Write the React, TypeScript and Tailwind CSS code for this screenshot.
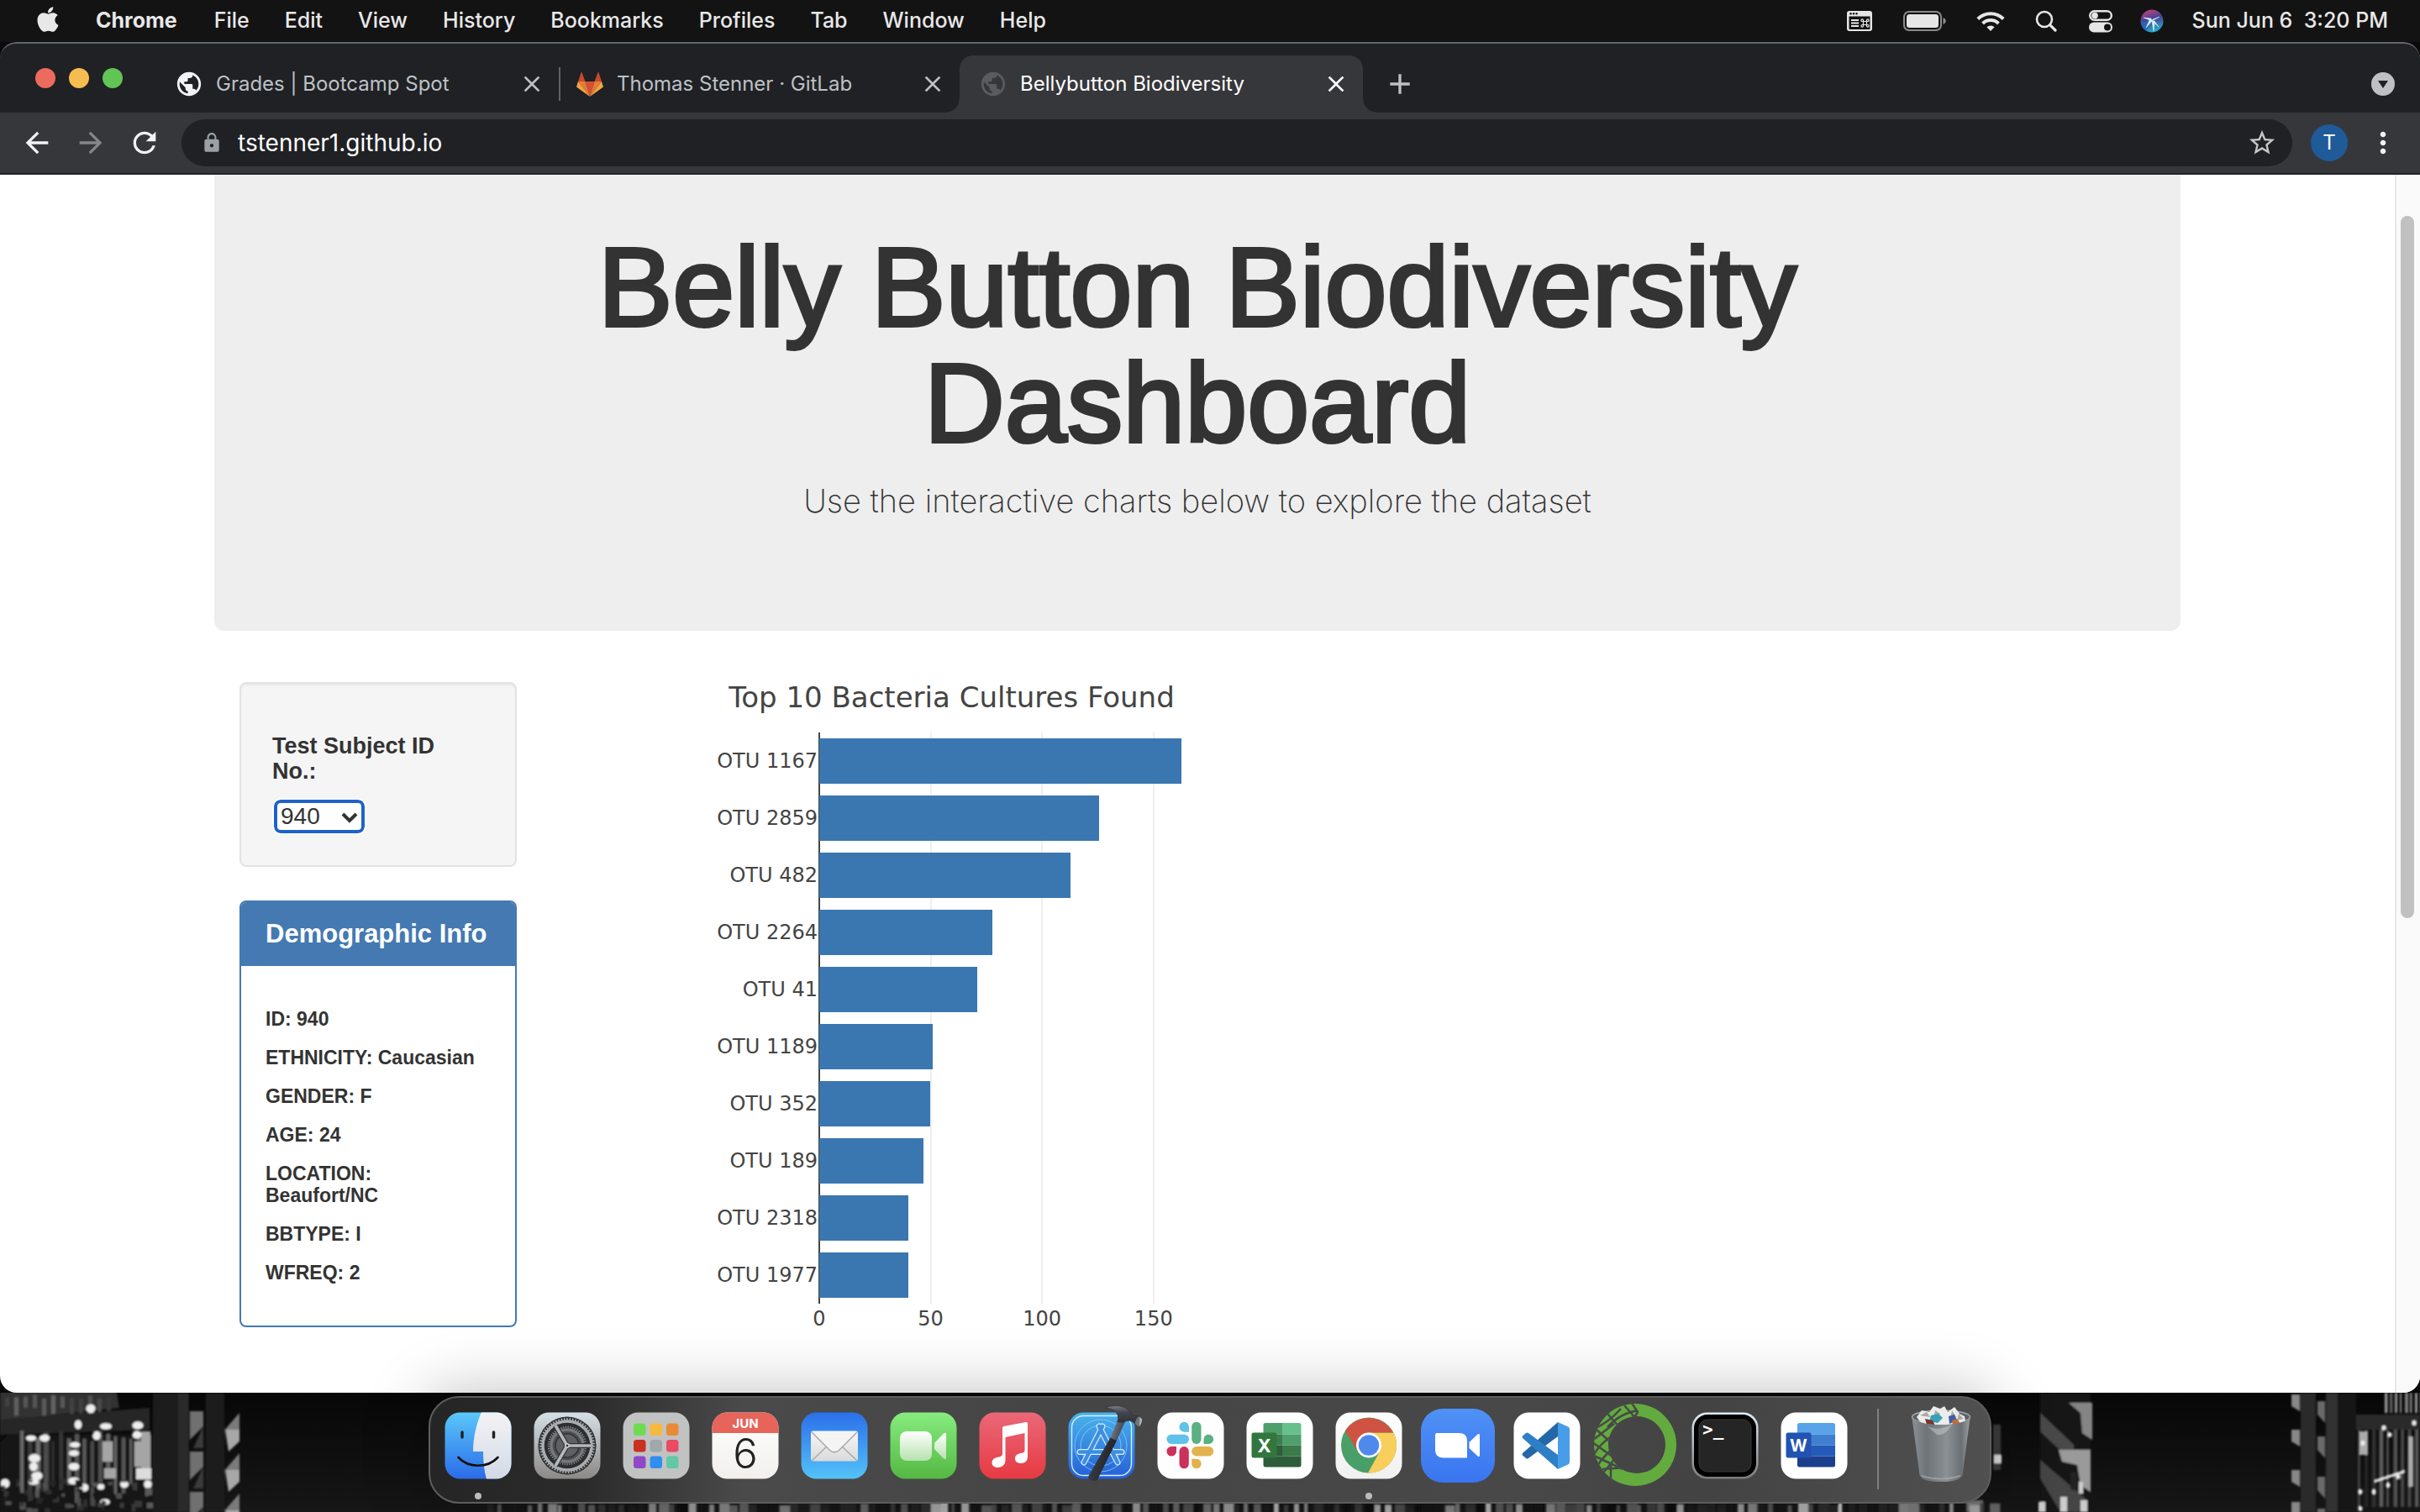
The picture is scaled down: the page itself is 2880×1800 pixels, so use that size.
import React from 'react';
import { FaApple } from 'react-icons/fa';
import {
  MdAdd,
  MdArrowBack,
  MdArrowForward,
  MdClose,
  MdLock,
  MdMoreVert,
  MdPublic,
  MdRefresh,
  MdStarBorder,
} from 'react-icons/md';

const menus = ['File', 'Edit', 'View', 'History', 'Bookmarks', 'Profiles', 'Tab', 'Window', 'Help'];

const cultures = [
  { id: 'OTU 1167', value: 163 },
  { id: 'OTU 2859', value: 126 },
  { id: 'OTU 482', value: 113 },
  { id: 'OTU 2264', value: 78 },
  { id: 'OTU 41', value: 71 },
  { id: 'OTU 1189', value: 51 },
  { id: 'OTU 352', value: 50 },
  { id: 'OTU 189', value: 47 },
  { id: 'OTU 2318', value: 40 },
  { id: 'OTU 1977', value: 40 },
];
const ticks = [0, 50, 100, 150];
const axisMax = 163 / 0.95;
const pct = (v: number) => `${(v / axisMax) * 100}%`;

const demographics = [
  'ID: 940',
  'ETHNICITY: Caucasian',
  'GENDER: F',
  'AGE: 24',
  'LOCATION: Beaufort/NC',
  'BBTYPE: I',
  'WFREQ: 2',
];

/* ---------- Menu bar ---------- */

function StatusIcons() {
  return (
    <div className="flex items-center">
      <svg className="mr-[37px] h-6 w-[30px]" viewBox="0 0 30 24" fill="#e6e6e6">
        <path fillRule="evenodd" d="M3 0h24a3 3 0 0 1 3 3v18a3 3 0 0 1-3 3H3a3 3 0 0 1-3-3V3a3 3 0 0 1 3-3zM2.500 6.500v14.500a1 1 0 0 0 1 1h23a1 1 0 0 0 1-1V6.500z" />
        <circle cx="4.500" cy="3.200" r="1.200" fill="#111" />
        <circle cx="8" cy="3.200" r="1.200" fill="#111" />
        <circle cx="11.500" cy="3.200" r="1.200" fill="#111" />
        <path d="M5 10h9v2H5zM5 13.500h9v2H5zM5 17h9v2H5z" />
        <path d="M19.500 12.500h4v4h-4zM19.500 12.500h-1.300a1.300 1.300 0 1 1 1.300-1.300zM23.500 12.500v-1.300a1.300 1.300 0 1 1 1.300 1.300zM19.500 16.500v1.300a1.300 1.300 0 1 1-1.300-1.300zM23.500 16.500h1.300a1.300 1.300 0 1 1-1.300 1.300z" fill="none" stroke="#e6e6e6" strokeWidth="1.200" />
      </svg>
      <svg className="mr-9 h-6 w-[51px]" viewBox="0 0 51 24">
        <rect x="1" y="1" width="44" height="22" rx="6" fill="none" stroke="#8a8a8a" strokeWidth="2" />
        <rect x="4" y="4" width="38" height="16" rx="3.500" fill="#e6e6e6" />
        <path d="M47.500 8v8c2-.8 3.200-2.200 3.200-4s-1.200-3.200-3.200-4z" fill="#8a8a8a" />
      </svg>
      <svg className="mr-9 h-6 w-[34px]" viewBox="0 0 34 24" fill="none" stroke="#e6e6e6" strokeWidth="4">
        <path d="M1.800 9.500a21.500 21.500 0 0 1 30.400 0" />
        <path d="M7.600 15a13.300 13.300 0 0 1 18.800 0" />
        <path d="M17 24l-4.600-4.700a6.500 6.500 0 0 1 9.200 0z" fill="#e6e6e6" stroke="none" />
      </svg>
      <svg className="mr-[38px] h-[26px] w-[26px]" viewBox="0 0 26 26" fill="none" stroke="#e6e6e6" strokeWidth="2.600" strokeLinecap="round">
        <circle cx="11" cy="11" r="9" />
        <path d="M17.800 17.800l6.200 6.200" strokeWidth="3.200" />
      </svg>
      <svg className="mr-[33px] h-7 w-7" viewBox="0 0 28 28">
        <rect x="1.200" y="2.200" width="25.600" height="10.600" rx="5.300" fill="none" stroke="#e6e6e6" strokeWidth="2.400" />
        <circle cx="7" cy="7.500" r="3.800" fill="#e6e6e6" />
        <rect x="0" y="15.500" width="28" height="12" rx="6" fill="#e6e6e6" />
        <circle cx="22" cy="21.500" r="4" fill="#111" />
      </svg>
      <svg className="mr-[34px] h-7 w-7" viewBox="0 0 28 28">
        <defs>
          <linearGradient id="siri" x1="0" y1="0" x2="0.300" y2="1">
            <stop offset="0" stopColor="#d4467c" />
            <stop offset="0.500" stopColor="#4a3f8f" />
            <stop offset="1" stopColor="#2aa3c4" />
          </linearGradient>
        </defs>
        <circle cx="14" cy="14" r="13.500" fill="url(#siri)" />
        <path d="M0.500 14a13.500 13.500 0 0 0 7 12l6-12z" fill="#2c62b8" opacity="0.800" />
        <path d="M14 14L4 10l9 1zM14 14l-7 8 4-9zM14 14l9-5-8 3zM14 14l8 7-5-7zM14 14l2 12 1-9z" fill="#e4fbff" stroke="#bdeeff" strokeWidth="0.600" />
      </svg>
    </div>
  );
}

function MenuBar() {
  return (
    <nav aria-label="Menu bar" className="flex h-[50px] items-center bg-[#131313] pr-[38px] pl-11 text-[25px] font-medium text-[#e8e8e8]">
      <button aria-label="Apple menu" className="mr-[44px] pb-1">
        <FaApple size={34} className="-mx-1" />
      </button>
      <button className="mr-[44px] font-bold">Chrome</button>
      <div className="flex gap-[42px]">
        {menus.map((m) => (
          <button key={m}>{m}</button>
        ))}
      </div>
      <div className="flex-1" />
      <StatusIcons />
      <time className="whitespace-pre">Sun Jun 6  3:20 PM</time>
    </nav>
  );
}

/* ---------- Browser chrome ---------- */

function GitlabIcon() {
  return (
    <svg className="h-[30px] w-8" viewBox="0 0 32 30">
      <path d="M6 0l4.500 12H2zM26 0l-4.500 12H30z" fill="#c8492d" />
      <path d="M10.500 12h11L16 30z" fill="#d4502f" />
      <path d="M2 12h8.500L16 30zM30 12h-8.500L16 30z" fill="#e67b38" />
      <path d="M2 12L0 18.500 16 30zM30 12l2 6.500L16 30z" fill="#efa744" />
    </svg>
  );
}

function Tab({ icon, title, active }: { icon: React.ReactNode; title: string; active?: boolean }) {
  return (
    <div
      className={
        active
          ? 'relative flex h-[68px] w-[480px] items-center rounded-t-[16px] bg-[#36373b] pr-4 pl-[23px] text-white'
          : 'flex h-[68px] w-[477px] items-center pr-4 pl-[20px] text-[#bdc1c6]'
      }
    >
      {active && (
        <>
          <span className="absolute bottom-0 -left-4 size-4 bg-[radial-gradient(circle_at_0_0,transparent_15px,#36373b_16px)]" />
          <span className="absolute -right-4 bottom-0 size-4 bg-[radial-gradient(circle_at_100%_0,transparent_15px,#36373b_16px)]" />
        </>
      )}
      <button role="tab" aria-selected={!!active} className="flex flex-1 items-center gap-[15px] text-left text-[24px]">
        <span className="flex w-[34px] justify-center">{icon}</span>
        {title}
      </button>
      <button aria-label={`Close ${title}`}>
        <MdClose size={32} />
      </button>
    </div>
  );
}

function TabStrip() {
  return (
    <div className="flex h-[82px] items-end pl-[42px]">
      <div className="mr-[42px] flex h-full gap-4 pt-[29px]">
        <button aria-label="Close window" className="size-6 rounded-full bg-[#ed6a5e]" />
        <button aria-label="Minimize window" className="size-6 rounded-full bg-[#f5bd4f]" />
        <button aria-label="Zoom window" className="size-6 rounded-full bg-[#61c454]" />
      </div>
      <div role="tablist" className="flex items-center">
        <Tab icon={<MdPublic size={34} className="text-[#f1f3f4]" />} title="Grades | Bootcamp Spot" />
        <span className="-mr-0.5 h-10 w-0.5 bg-[#5f6165]" />
        <Tab icon={<GitlabIcon />} title="Thomas Stenner · GitLab" />
        <Tab active icon={<MdPublic size={34} className="text-[#5a5b5f]" />} title="Bellybutton Biodiversity" />
      </div>
      <button aria-label="New tab" className="ml-6 flex h-[68px] items-center text-[#bdc1c6]">
        <MdAdd size={40} />
      </button>
      <div className="flex-1" />
      <button aria-label="Search tabs" className="mr-[30px] flex h-[68px] items-center">
        <svg className="size-7" viewBox="0 0 28 28">
          <circle cx="14" cy="14" r="14" fill="#bdc1c6" />
          <path d="M8 10h12l-6 9z" fill="#202124" />
        </svg>
      </button>
    </div>
  );
}

function Toolbar() {
  return (
    <div className="flex h-[74px] items-center border-b-2 border-[#232326] bg-[#36373b] px-6 text-[#f1f3f4]">
      <button aria-label="Back"><MdArrowBack size={40} /></button>
      <button aria-label="Forward" className="ml-6 text-[#85868a]"><MdArrowForward size={40} /></button>
      <button aria-label="Reload" className="ml-6"><MdRefresh size={40} /></button>
      <form className="ml-[24px] flex h-14 flex-1 items-center rounded-full bg-[#202124] pr-[18px] pl-[23px]">
        <MdLock size={26} className="text-[#9aa0a6]" />
        <input
          aria-label="Address"
          defaultValue="tstenner1.github.io"
          className="ml-[18px] flex-1 bg-transparent text-[28px] text-white outline-none"
        />
        <button type="button" aria-label="Bookmark this page" className="text-[#c6c7c5]"><MdStarBorder size={36} /></button>
      </form>
      <button aria-label="Profile" className="ml-[22px] flex size-11 items-center justify-center rounded-full bg-[#1f5a99] text-[24px] text-white">T</button>
      <button aria-label="More" className="ml-[22px]"><MdMoreVert size={40} /></button>
    </div>
  );
}

/* ---------- Page ---------- */

function Sidebar() {
  return (
    <aside className="col-span-2 flex flex-col gap-10 px-[30px] pt-[61px] text-[#333]">
      <div className="rounded-lg border-2 border-[#e3e3e3] bg-[#f5f5f5] px-[37px] pt-[59px] pb-[38px] shadow-[inset_0_2px_2px_rgba(0,0,0,0.05)]">
        <label htmlFor="subject" className="block text-[27px] leading-[30px] font-bold">
          Test Subject ID No.:
        </label>
        <div className="relative mt-[19px] ml-0.5 w-[108px]">
          <select
            id="subject"
            defaultValue="940"
            className="block h-10 w-full appearance-none rounded-lg border-4 border-[#1f62c9] bg-white pl-1 text-[28px] leading-[32px] text-[#333] outline-2 outline-white"
          >
            <option>940</option>
          </select>
          <svg className="pointer-events-none absolute top-3.5 right-2 h-3.5 w-5" viewBox="0 0 20 14" fill="none" stroke="#333" strokeWidth="4">
            <path d="M2 3l8 8 8-8" />
          </svg>
        </div>
      </div>
      <section className="overflow-hidden rounded-lg border-2 border-[#4479b1] bg-white">
        <h3 className="bg-[#4479b1] px-[29px] py-5 text-[31px] leading-9 font-bold text-white">Demographic Info</h3>
        <ul className="flex flex-col gap-5 pt-[50px] pr-10 pb-[50px] pl-[29px] text-[23px] leading-[26px] font-bold">
          {demographics.map((d) => (
            <li key={d}>{d}</li>
          ))}
        </ul>
      </section>
    </aside>
  );
}

function Chart() {
  return (
    <figure className="col-span-5 px-[30px] pt-[57px] font-['DejaVu_Sans',sans-serif] text-[#444]">
      <figcaption className="text-center text-[34px] leading-[44px]">Top 10 Bacteria Cultures Found</figcaption>
      <div className="mt-[20px] grid grid-cols-[300px_minmax(0,1fr)] pr-[160px]">
        <ul className="text-right text-[24px] leading-[68px]">
          {cultures.map((c) => (
            <li key={c.id} className="pr-0.5">{c.id}</li>
          ))}
        </ul>
        <div className="relative">
          {ticks.slice(1).map((t) => (
            <span key={t} className="absolute inset-y-0 w-0.5 -translate-x-1/2 bg-[#eee]" style={{ left: pct(t) }} />
          ))}
          <div className="relative -ml-px border-l-2 border-[#444]">
            {cultures.map((c) => (
              <div key={c.id} className="h-[68px] py-[7px]">
                <div className="-ml-px h-full bg-[#3a77b0]" style={{ width: pct(c.value) }} />
              </div>
            ))}
          </div>
        </div>
        <div />
        <div className="relative h-10 text-[24px] leading-9">
          {ticks.map((t) => (
            <span key={t} className="absolute -translate-x-1/2" style={{ left: pct(t) }}>{t}</span>
          ))}
        </div>
      </div>
    </figure>
  );
}

function Page() {
  return (
    <div className="flex flex-1 bg-white font-['Liberation_Sans',Arial,sans-serif]">
      <main className="flex-1">
        <div className="mx-auto max-w-[2340px]">
          <header className="rounded-b-xl bg-[#eee] px-[120px] pt-[65px] pb-[121px] text-center text-[#333]">
            <h1 className="text-[133px] leading-[138px] [-webkit-text-stroke:4px_#333]">
              Belly Button Biodiversity<br />Dashboard
            </h1>
            <p className="mt-[13px] font-['Inter',sans-serif] text-[38px] leading-[68px] font-extralight">
              Use the interactive charts below to explore the dataset
            </p>
          </header>
          <div className="grid grid-cols-12">
            <Sidebar />
            <Chart />
          </div>
        </div>
      </main>
      <div className="w-[30px] border-l-2 border-[#e8e8e8] bg-[#fafafa] pt-[49px] pl-[5px]">
        <div className="h-[836px] w-4 rounded-full bg-[#c1c1c1]" />
      </div>
    </div>
  );
}

/* ---------- Dock icons, drawn on an 80 unit cell ---------- */

function Grad({ id, from, to }: { id: string; from: string; to: string }) {
  return (
    <defs>
      <linearGradient id={id} x1="0" y1="0" x2="0" y2="1">
        <stop offset="0" stopColor={from} />
        <stop offset="1" stopColor={to} />
      </linearGradient>
    </defs>
  );
}

const Plate = ({ fill }: { fill: string }) => <rect x="0.500" y="0.500" width="79" height="79" rx="18" fill={fill} />;

const Finder = () => (
  <>
    <Grad id="fdr" from="#5ac8fa" to="#2b6be8" />
    <Grad id="fdr2" from="#f3f3f6" to="#d2dae6" />
    <clipPath id="fclip"><rect x="0.500" y="0.500" width="79" height="79" rx="18" /></clipPath>
    <Plate fill="url(#fdr)" />
    <path clipPath="url(#fclip)" d="M44 0c-6 14-10 30-10 47h12c0 12 1 22 4 33h32V0z" fill="url(#fdr2)" />
    <path d="M21 24v6M58.500 24v6" stroke="#222" strokeWidth="3.500" strokeLinecap="round" />
    <path d="M16.500 54c12 13 35 13 47 0" fill="none" stroke="#111" strokeWidth="2.600" strokeLinecap="round" />
  </>
);

const Settings = () => (
  <>
    <Grad id="set" from="#d5e0e6" to="#8c8986" />
    <Plate fill="url(#set)" />
    <circle cx="40" cy="40" r="34.500" fill="#2c2e30" />
    <circle cx="40" cy="40" r="29" fill="none" stroke="#a9adaf" strokeWidth="3.500" />
    <circle cx="40" cy="40" r="31.500" fill="none" stroke="#a9adaf" strokeWidth="3" strokeDasharray="1.600 1.750" />
    <circle cx="40" cy="40" r="19" fill="#4c4f51" stroke="#76797b" strokeWidth="3.500" />
    <circle cx="40" cy="40" r="22" fill="none" stroke="#85898b" strokeWidth="2.500" strokeDasharray="1.300 1.500" />
    <circle cx="40" cy="40" r="14" fill="#5d6163" stroke="#333" strokeWidth="1.500" />
    <path d="M40 40h28M40 40L26 16M40 40L26 64" stroke="#303234" strokeWidth="6" />
    <path d="M40 40h28M40 40L26 16M40 40L26 64" stroke="#b4b8ba" strokeWidth="3.600" />
    <circle cx="40" cy="40" r="3" fill="#c3c7c9" />
    <circle cx="40" cy="40" r="1.300" fill="#333" />
  </>
);

const padColors = ['#6fdc50', '#f5b93b', '#e98b36', '#c9301f', '#a0a8ab', '#ea4a62', '#8e48c8', '#2f8ff0', '#62c7a4'];
const Launchpad = () => (
  <>
    <Plate fill="#c1c2c2" />
    {padColors.map((c, i) => (
      <rect key={c} x={13 + (i % 3) * 19.5} y={13.500 + Math.floor(i / 3) * 19.5} width="14.500" height="14.500" rx="3.500" fill={c} />
    ))}
  </>
);

const Calendar = () => (
  <>
    <Grad id="cal" from="#ffffff" to="#f1f0ee" />
    <Plate fill="url(#cal)" />
    <path d="M0.500 25V18.500a18 18 0 0 1 18-18h43a18 18 0 0 1 18 18V25z" fill="#e6645a" />
    <text x="40" y="19" textAnchor="middle" fontSize="15" fontWeight="700" fill="#fff">JUN</text>
    <text x="40" y="67" textAnchor="middle" fontSize="49" fontWeight="300" fill="#222">6</text>
  </>
);

const Mail = () => (
  <>
    <Grad id="mail" from="#2b70ea" to="#54c2f8" />
    <Grad id="mail2" from="#f7f7f7" to="#dadada" />
    <Plate fill="url(#mail)" />
    <rect x="12" y="22.500" width="56" height="36" rx="3" fill="url(#mail2)" />
    <path d="M13.500 57.500L31 41M66.500 57.500L49 41" stroke="#a9a9a9" strokeWidth="1.400" />
    <path d="M13 24l21 21q6 5.500 12 0l21-21" fill="#f4f4f4" stroke="#a5a5a5" strokeWidth="1.400" />
  </>
);

const FaceTime = () => (
  <>
    <Grad id="ft" from="#86ec7e" to="#55b843" />
    <Grad id="ft2" from="#ffffff" to="#b6e2ae" />
    <Plate fill="url(#ft)" />
    <rect x="12" y="23" width="38" height="35" rx="8" fill="url(#ft2)" />
    <path d="M53 37l11-11.500q3-2 3 1v28q0 3-3 1L53 44z" fill="url(#ft2)" />
  </>
);

const Music = () => (
  <>
    <Grad id="mus" from="#ea6878" to="#e63a42" />
    <Plate fill="url(#mus)" />
    <path d="M28 19q0-1.500 1.500-2L56 12q2-.3 2 1.500V53c0 5-3 8-8 8-4.500 0-7-2.500-7-5.500 0-4 3-6 7-6.500 3.500-.5 4.500-1.500 4.500-4V25L31.500 30v27c0 5.500-3.500 9-9 9-4.500 0-7-2.500-7-5.500 0-4 3-6 7-6.700 4-.6 5.500-1.800 5.500-4.500z" fill="#fff" />
  </>
);

const Xcode = () => (
  <>
    <defs>
      <linearGradient id="hammerHead" x1="0" y1="0" x2="0" y2="1">
        <stop offset="0" stopColor="#7a7d86" />
        <stop offset="0.350" stopColor="#43464e" />
        <stop offset="1" stopColor="#2b2d33" />
      </linearGradient>
      <linearGradient id="shaft" x1="0" y1="0" x2="1" y2="0.400">
        <stop offset="0" stopColor="#8b9098" />
        <stop offset="0.500" stopColor="#5c616b" />
        <stop offset="1" stopColor="#3c4049" />
      </linearGradient>
      <linearGradient id="grip" x1="0" y1="0" x2="1" y2="0.400">
        <stop offset="0.300" stopColor="#3a3c44" />
        <stop offset="1" stopColor="#1f2026" />
      </linearGradient>
    </defs>
    <Grad id="xc" from="#49b3ec" to="#245fd6" />
    <Plate fill="url(#xc)" />
    <rect x="4.500" y="4.500" width="71" height="71" rx="14" fill="none" stroke="#d9efff" strokeWidth="1.400" />
    <circle cx="39" cy="40" r="31" fill="none" stroke="#8fcaf5" strokeWidth="0.800" />
    <circle cx="39" cy="40" r="24" fill="none" stroke="#8fcaf5" strokeWidth="0.800" />
    <g stroke="#d9efff" strokeWidth="7" strokeLinecap="round">
      <path d="M14 47.500h50M41 17L19 60M37 17l22 43" />
    </g>
    <g stroke="#3d8fe0" strokeWidth="4.600" strokeLinecap="round">
      <path d="M14 47.500h50M41 17L19 60M37 17l22 43" />
    </g>
    <path d="M59 10h9.500L58 34l-7.500-3z" fill="url(#shaft)" />
    <path d="M50.500 30.500L58 34 35 80.500q-1.500 2-5 1.500-5.500-1-6-5z" fill="url(#grip)" />
    <path d="M44-5Q49-7.500 56-7.500 66-7.500 71-3L77 4 83 4.500 86 5 80 15 77 11.500Q70 9 67 12H59Q61 3 56-1 51-4.500 44-5z" fill="url(#hammerHead)" stroke="#2c2e34" strokeWidth="0.600" />
    <path d="M84.500 5l3.500 3q.5 6-3.500 9.500l-5-3.500q1-6 5-9z" fill="#6f737c" />
    <path d="M85.500 6l2.500 2.500q0 5-3 8z" fill="#b2b5bc" />
  </>
);

const Slack = () => (
  <>
    <Plate fill="#fefefe" />
    <path d="M38 23.700h-6a5.800 6 0 1 1 6-6z" fill="#5fc2ea" />
    <rect x="11.400" y="26.700" width="26.600" height="11.300" rx="5.650" fill="#5fc2ea" />
    <rect x="41.200" y="11.700" width="11.300" height="26.300" rx="5.650" fill="#5ab083" />
    <path d="M55.500 38v-6a5.800 5.600 0 1 1 6 6z" fill="#5ab083" />
    <path d="M23 41v6a5.800 5.800 0 1 1-6-6z" fill="#cc315b" />
    <rect x="26.500" y="41" width="11.300" height="26.300" rx="5.650" fill="#cc315b" />
    <rect x="41.200" y="41" width="26" height="11.500" rx="5.700" fill="#e2b24c" />
    <path d="M41.200 55.700h6a5.700 5.800 0 1 1-6 6z" fill="#e2b24c" />
  </>
);

const Excel = () => (
  <>
    <Plate fill="#fff" />
    <path d="M23 13h20v13.500H20.500V15.500Q20.500 13 23 13z" fill="#4e9f6c" />
    <path d="M43 13h20q2.500 0 2.500 2.500v11H43z" fill="#67c08c" />
    <path d="M20.500 26.500H43v13H20.500z" fill="#3d7d4d" />
    <path d="M43 26.500h22.500v13H43z" fill="#4e9f6c" />
    <path d="M20.500 39.500H43v13H20.500z" fill="#2d5d3b" />
    <path d="M43 39.500h22.500v13H43z" fill="#3b7a49" />
    <path d="M20.500 52.500h45V63q0 2.500-2.500 2.500H23q-2.500 0-2.500-2.500z" fill="#2d5d3b" />
    <rect x="6.500" y="24.500" width="30" height="30" rx="2.500" fill="#32763f" />
    <text x="21.500" y="47.500" textAnchor="middle" fontSize="22" fontWeight="700" fill="#fff">X</text>
  </>
);

const Word = () => (
  <>
    <Plate fill="#fff" />
    <path d="M22.500 13H62.500q2.500 0 2.500 2.500v11H20v-11q0-2.500 2.500-2.500z" fill="#59a4e8" />
    <path d="M20 26.500h45v13H20z" fill="#3e7fd0" />
    <path d="M20 39.500h45v13H20z" fill="#255bb8" />
    <path d="M20 52.500h45V63q0 2.500-2.500 2.500h-40Q20 65.500 20 63z" fill="#1b3f8c" />
    <rect x="6.500" y="24.500" width="30" height="30" rx="2.500" fill="#2253b2" />
    <text x="21.500" y="46.500" textAnchor="middle" fontSize="20" fontWeight="700" fill="#fff">W</text>
  </>
);

const Chrome = () => (
  <>
    <Grad id="chr" from="#ffffff" to="#f0f0f0" />
    <Plate fill="url(#chr)" />
    <circle cx="40" cy="39.500" r="33" fill="#4a9f68" />
    <path d="M40 39.500V24.500H69.500A33 33 0 0 1 39 72.500L53 47z" fill="#f8cf5c" />
    <path d="M40 39.500L27 47 11.800 22.500A33 33 0 0 1 69 24.500H40z" fill="#cf5343" />
    <circle cx="40" cy="39.500" r="15" fill="#fff" />
    <circle cx="40" cy="39.500" r="12.200" fill="#5089ec" />
  </>
);

const Zoom = () => (
  <>
    <Grad id="zm" from="#4f91f5" to="#3a75f0" />
    <rect x="-4" y="-4" width="88" height="88" rx="26" fill="url(#zm)" />
    <path d="M15 25h26q10 0 10 9v20.500H23q-10 0-10-9V27q0-2 2-2z" fill="#fff" />
    <path d="M53.500 36l10-9.500q2.500-1.500 2.500 1v24q0 2.500-2.500 1l-10-9.500z" fill="#fff" />
  </>
);

const VSCode = () => (
  <>
    <Plate fill="#fff" />
    <path d="M53 12L11 49q-.8 1.200 0 2.400l4 3.600q1.500 1 3 0l35-26z" fill="#2468a8" />
    <path d="M53 68L11 31q-.8-1.200 0-2.400l4-3.600q1.500-1 3 0l35 26z" fill="#2f7fc6" />
    <path d="M53 12l12 5.500q2 1 2 3v39q0 2-2 3L53 68z" fill="#489de8" />
  </>
);

const Anaconda = () => (
  <>
    <clipPath id="ring">
      <path clipRule="evenodd" d="M39-10a49 49 0 1 0 .1 0zM41 5a34 34 0 1 1-.1 0z" />
    </clipPath>
    <path fillRule="evenodd" d="M39-10a49 49 0 1 0 .1 0zM41 5a34 34 0 1 1-.1 0z" fill="#63ab3f" />
    <g clipPath="url(#ring)" stroke="#484848" strokeWidth="2.600" fill="none">
      <path d="M34-12l8 12-6 10M42-2Q20 2 6 18M26-8l14 16M22-4Q8 12-10 20M6 2l16 18M14 14Q-2 26-12 34M-8 20l20 18M12 28Q-4 38-12 54M-12 36L16 56M12 44Q0 54-6 64M-10 52l34 16M16 54L-2 76M10 62v28M28 66L0 68" />
    </g>
  </>
);

const Terminal = () => (
  <>
    <Grad id="term" from="#dcebf4" to="#7d7b79" />
    <Plate fill="url(#term)" />
    <rect x="3" y="3" width="74" height="74" rx="16" fill="#000" />
    <rect x="9" y="9" width="62" height="62" rx="10" fill="#252525" stroke="#3a3a3a" strokeWidth="1" />
    <text x="13" y="28" fontFamily="DejaVu Sans Mono, monospace" fontSize="21" fontWeight="700" fill="#fff">&gt;_</text>
  </>
);

const Trash = () => (
  <>
    <defs>
      <linearGradient id="tr" x1="0" y1="0" x2="1" y2="0">
        <stop offset="0" stopColor="#8b9195" />
        <stop offset="0.250" stopColor="#6d7377" />
        <stop offset="0.600" stopColor="#8a9094" />
        <stop offset="0.850" stopColor="#6a7074" />
        <stop offset="1" stopColor="#9aa0a4" />
      </linearGradient>
    </defs>
    <ellipse cx="41" cy="6" rx="34.500" ry="8" fill="#5c6164" stroke="#a4a9ac" strokeWidth="1.500" />
    <path d="M12 6l6-8 9 2 5-7 8 3 5-3 4 7 8-6 6 8 6 3 1 6-6 6H20z" fill="#ececea" />
    <path d="M16 4l8-4 4 6zM34-2l6 4-8 6zM54-2l5 8-7 2zM62 2l6 6-8 2z" fill="#a9a9a6" />
    <path d="M29 4l9-2 5 5-6 6-10-2z" fill="#39a0b8" />
    <path d="M22 8l9 2 3 6-10-1z" fill="#7c352a" />
    <path d="M50 5l7-2 3 7-9 4z" fill="#3d5fa8" />
    <path d="M54 10l6-2 4 6-9 2z" fill="#c26a34" />
    <path d="M6.500 7q10 8 34.500 8t34.500-8l-9 68q-3 8-25.500 8t-25.500-8z" fill="url(#tr)" />
    <path d="M24 16q12 8 30-1-8 14-18 12z" fill="#c9ccce" opacity="0.500" />
    <path d="M18 76q22 7 46 0" stroke="#b5babd" strokeWidth="1.500" fill="none" opacity="0.600" />
  </>
);

const apps = [
  { name: 'Finder', Icon: Finder, running: true },
  { name: 'System Preferences', Icon: Settings },
  { name: 'Launchpad', Icon: Launchpad },
  { name: 'Calendar', Icon: Calendar },
  { name: 'Mail', Icon: Mail },
  { name: 'FaceTime', Icon: FaceTime },
  { name: 'Music', Icon: Music },
  { name: 'Xcode', Icon: Xcode },
  { name: 'Slack', Icon: Slack },
  { name: 'Excel', Icon: Excel },
  { name: 'Google Chrome', Icon: Chrome, running: true },
  { name: 'Zoom', Icon: Zoom },
  { name: 'Visual Studio Code', Icon: VSCode },
  { name: 'Anaconda', Icon: Anaconda },
  { name: 'Terminal', Icon: Terminal },
  { name: 'Word', Icon: Word },
];

function DockIcon({ name, Icon, running }: { name: string; Icon: React.ComponentType; running?: boolean }) {
  return (
    <button aria-label={name} className="relative size-20">
      <svg viewBox="0 0 80 80" className="size-20 overflow-visible font-['Inter',sans-serif]">
        <Icon />
      </svg>
      {running && <span className="absolute -bottom-6 left-1/2 size-2 -translate-x-1/2 rounded-full bg-[#bbb]" />}
    </button>
  );
}

/* ---------- Desktop picture: dim street scene behind the dock ---------- */

const noise = (n: number) => {
  const v = Math.sin(n * 127.1 + 11.7) * 43758.5453;
  return v - Math.floor(v);
};
const grey = (v: number) => {
  const c = Math.round(v);
  return `rgb(${c},${c},${c})`;
};

function Wallpaper() {
  return (
    <svg className="absolute inset-0 h-full w-full" viewBox="0 0 2880 142" preserveAspectRatio="none">
      <defs>
        <filter id="soft"><feGaussianBlur stdDeviation="1.300" /></filter>
        <linearGradient id="night" x1="0" y1="0" x2="0" y2="1">
          <stop offset="0" stopColor="#070707" />
          <stop offset="1" stopColor="#161616" />
        </linearGradient>
      </defs>
      <rect width="2880" height="142" fill="url(#night)" />
      <g filter="url(#soft)">
        <path d="M0-16h136l6 34L0 34z" fill="#303030" />
        {Array.from({ length: 12 }, (_, i) => (
          <rect key={i} x={6 + i * 11} y={2 + noise(i) * 5} width="5" height={10 + noise(i + 3) * 12} fill={grey(50 + noise(i + 9) * 50)} />
        ))}
        <path d="M0 32l178-14v26L0 50z" fill="#282828" />
        <path d="M10 50h172v92H0V60z" fill="#151515" />
        {Array.from({ length: 17 }, (_, i) => (
          <rect key={i} x={24 + i * 9.3} y={44 + noise(i + 20) * 14} width={3 + noise(i + 31) * 4} height={50 + noise(i + 50) * 34} fill={grey(40 + noise(i + 77) * 75)} />
        ))}
        <path d="M122 58h12v24h-12zM168 46h11v46h-11zM124 90h14v12h-14zM160 58h8v30h-8z" fill="#a5a5a5" />
        <path d="M162 90h18v13h-18z" fill="#ddd" />
        {[[37, 54], [53, 54], [108, 19], [93, 38], [126, 40], [115, 51], [163, 50], [164, 39], [41, 78], [40, 88], [44, 99], [40, 106], [88, 72], [88, 88], [88, 105], [89, 62], [148, 109], [176, 109], [125, 130], [6, 108], [120, 112], [100, 113]].map(([x, y], i) => (
          <ellipse key={i} cx={x} cy={y} rx={4 + noise(i) * 3} ry={3 + noise(i + 5) * 2.5} fill="#eee" />
        ))}
        {Array.from({ length: 60 }, (_, i) => (
          <rect key={i} x={noise(i + 100) * 175} y={102 + noise(i + 200) * 36} width={2 + noise(i) * 7} height={2 + noise(i + 300) * 8} fill={grey(20 + noise(i + 400) * 70)} />
        ))}
        <rect x="182" width="43" height="142" fill="#1c1c1c" />
        <rect x="212" width="12" height="142" fill="#2c2c2c" />
        <rect x="245" width="22" height="142" fill="#1a1a1a" />
        {[22, 70, 118].map((y) => (
          <g key={y}>
            <path d={`M226 ${y}h16v18l-16 16z`} fill="#707070" />
            <path d={`M242 ${y + 18}v26h-12z`} fill="#3a3a3a" />
            <path d={`M268 ${y + 22}h17v-20l-14 16z`} fill="#7a7a7a" />
            <path d={`M268 ${y + 22}h17v14l-13 12z`} fill="#a8a8a8" />
          </g>
        ))}
        <rect x="2372" y="38" width="9" height="54" fill="#3c3c3c" />
        <rect x="2373" y="74" width="9" height="10" fill="#ddd" />
        <rect x="2340" y="128" width="20" height="14" fill="#777" />
        <path d="M2428 0h60v142h-60z" fill="#151515" />
        <path d="M2428 24l40 38v22l-40-38z" fill="#4a4a4a" />
        <path d="M2462 12h28v44l-12-8-2-24z" fill="#858585" />
        <path d="M2450 68h38v50l-12-8-4-24-18-4z" fill="#9a9a9a" />
        <path d="M2428 80l54 46v16h-30l-24-40z" fill="#454545" />
        <path d="M2452 124h8v18h-8zM2426 130h8v12h-8zM2474 106h5v14h-5zM2476 128h8v14h-8z" fill="#ccc" />
        <rect x="2464" y="94" width="8" height="22" rx="3" fill="#222" />
        {[2, 44, 92, 130].map((y) => (
          <g key={y}>
            <path d={`M2727 ${y}h10v20l-10-6z`} fill="#888" />
            <path d={`M2758 ${y + 8}h9v26l-9-10z`} fill="#6a6a6a" />
          </g>
        ))}
        <rect x="2738" width="18" height="142" fill="#2c2c2c" />
        <rect x="2768" width="14" height="142" fill="#303030" />
        <rect x="2782" width="22" height="142" fill="#131313" />
        {Array.from({ length: 8 }, (_, i) => (
          <rect key={i} x={2838 + i * 6} y="0" width={2 + noise(i) * 2} height="24" fill={grey(70 + noise(i + 8) * 80)} />
        ))}
        <rect x="2804" y="26" width="76" height="18" fill="#2a2a2a" />
        {Array.from({ length: 9 }, (_, i) => (
          <rect key={i} x={2806 + i * 8.500} y="44" width={2 + noise(i + 5) * 3} height="92" fill={grey(35 + noise(i + 80) * 70)} />
        ))}
        <path d="M2808 46h10v28h-10zM2866 52h6v60h-6z" fill="#aaa" />
        <path d="M2826 104l36-12v3l-36 12z" fill="#eee" />
        {[[2837, 42], [2844, 50], [2873, 36], [2842, 110], [2825, 118], [2809, 118], [2854, 100], [2809, 138], [2812, 60]].map(([x, y], i) => (
          <ellipse key={i} cx={x} cy={y} rx="2.500" ry="3" fill="#eee" />
        ))}
        {Array.from({ length: 150 }, (_, i) => (
          <rect key={i} x={580 + i * 12} y={130 + noise(i) * 4} width={4 + noise(i + 60) * 10} height="14" fill={grey(15 + noise(i + 500) * noise(i + 900) * 210)} />
        ))}
      </g>
    </svg>
  );
}

function Dock() {
  return (
    <footer className="relative h-[142px]">
      <Wallpaper />
      <div className="relative mx-auto mt-1 flex h-32 w-fit items-start rounded-[36px] border-2 border-[#5e5e5e] bg-[#454545] bg-[linear-gradient(90deg,#252525,#2b2b2b_10%,#4a4a4a_20%,#454545_40%,#484848_70%,#434343_82%,#505050)] pt-[17px] pr-[19px] pl-[17px] shadow-[0_0_70px_10px_rgba(0,0,0,0.220)]">
        <div className="flex gap-[26px]">
          {apps.map((a) => (
            <DockIcon key={a.name} {...a} />
          ))}
        </div>
        <div className="mr-[33px] ml-[35px] h-24 w-0.5 -translate-y-1 bg-[#808080]" />
        <DockIcon name="Trash" Icon={Trash} />
      </div>
    </footer>
  );
}

export default function App() {
  return (
    <div className="flex min-h-screen flex-col overflow-hidden bg-[#0a0a0a] font-['Inter',sans-serif]">
      <MenuBar />
      <div className="flex flex-1 flex-col overflow-hidden rounded-[20px] border-t-2 border-[#66676a] bg-[#202124]">
        <TabStrip />
        <Toolbar />
        <Page />
      </div>
      <Dock />
    </div>
  );
}
